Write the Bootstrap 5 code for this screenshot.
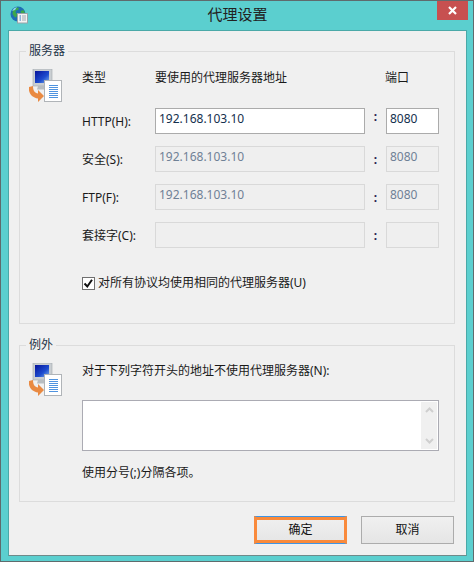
<!DOCTYPE html>
<html lang="zh">
<head>
<meta charset="utf-8">
<title>代理设置</title>
<link href="https://cdn.jsdelivr.net/npm/bootstrap@5.3.0/dist/css/bootstrap.min.css" rel="stylesheet">
<style>
html,body{margin:0;height:562px;overflow:hidden;background:#5bcfcf}
body{font-family:"Noto Sans","Noto Sans CJK SC",sans-serif;font-size:12px;line-height:16px;color:#1a1a1a}
.win-frame{height:562px;border:1px solid #5f6b6d;background:#5bcfcf;padding:0 6px 5px 7px}
.win-title{height:29px;flex:none}
.win-side{flex:1 1 0;min-width:0}
.win-caption{font-size:15px;line-height:20px;color:#222;margin-top:3px}
.win-globe{margin:5px 0 0 2px;display:block}
.win-close{width:31px;height:19px;margin-right:-1px;background:#c75050;border:0;padding:0}
.win-client{flex:1 1 auto;background:#f0f0f0;border:1px solid #4aa9a8;border-bottom-color:#6f8a8a;padding:12px 11px 0 10px}
.win-group{border:1px solid #dcdcdc;min-width:0;margin:0;padding:0;height:auto}
.win-group legend{float:none;width:auto;font-size:12px;line-height:16px;margin:0 0 0 6px;padding:0 3px;color:#1f3347}
.group-a{height:281px}
.group-b{height:165px;margin-top:13px}
.icon-col{width:62px;flex:none;padding:10px 0 0 9px}
.icon-col svg{display:block}
.proxy-grid{display:grid;grid-template-columns:73px 210px 21px 53px;grid-auto-rows:26px;row-gap:12px;width:357px}
.proxy-head{height:16px;margin-top:11px;margin-bottom:22px;display:grid;grid-template-columns:73px 231px 53px;width:357px}
.proxy-head span:last-child{margin-left:-1px}
.row-label{padding-top:6px;white-space:nowrap}
.colon{text-align:center;font-weight:700;color:#2b1b4f;padding-top:6px;line-height:16px}
.colon-up{padding-top:1px}
.win-input.form-control{border:1px solid #ababab;border-radius:0;font-size:12px;line-height:16px;padding:0 3px 6px 3px;height:26px;min-height:0;background:#fff;color:#14304e;box-shadow:none}
.win-input.form-control:disabled{border-color:#d9d9d9;background:#efefef;color:#6f8196;opacity:1}
.win-check{margin-top:27px;gap:3px;min-height:0;padding:0}
.win-check .form-check-input{width:13px;height:13px;margin:0;float:none;border:1px solid #707070;border-radius:0;background-color:#fff;background-size:13px;box-shadow:none}
.win-check .form-check-input:checked{background-color:#fff;border-color:#707070;background-image:url("data:image/svg+xml,%3csvg xmlns='http://www.w3.org/2000/svg' viewBox='0 0 13 13'%3e%3cpath fill='none' stroke='%23111' stroke-width='2' d='M2.5 6.5l2.8 3L10 2.8'/%3e%3c/svg%3e")}
.win-check .form-check-label{color:#1a1a1a}
.excl-text{margin-top:10px;height:16px}
.excl-box{width:357px;height:51px;margin-top:21px;border:1px solid #ababb3;background:#fff;padding:1px}
.excl-box textarea{border:0;border-radius:0;resize:none;height:100%;min-height:0;padding:2px;box-shadow:none;background:#fff}
.win-scroll{width:16px;flex:none;background:#f0f0f0;padding:5px 0}
.win-scroll svg{display:block;margin:0 auto}
.excl-note{margin-top:14px}
.win-actions{gap:14px;margin-top:14px;margin-right:1px}
.win-btn.btn{width:93px;height:28px;padding:0;border-radius:0;font-size:12px;line-height:16px;color:#111;border:1px solid #acacac;background:linear-gradient(#f0f0f0,#e5e5e5)}
.win-btn.win-primary.btn{border-width:1px 3px;border-color:#3d95e6 #f98a3c;box-shadow:inset 0 3px 0 #f98a3c,inset 0 -3px 0 #f98a3c}
</style>
</head>
<body>
<div class="win-frame d-flex flex-column">
  <div class="win-title d-flex align-items-start">
    <div class="win-side">
      <svg class="win-globe" width="18" height="18" viewBox="0 0 18 18">
        <circle cx="8" cy="8" r="7.5" fill="#1f6fb5"/>
        <path d="M3 3.5c2-2.5 5-2.5 6-1.500l-1 2-2 .5-.5 2 1.500 1.500-.5 3-1.500.5-2.500-3.500zM10.500 5l3-1 1.500 3-1 3-2.500-1.500z" fill="#3da84a"/>
        <path d="M2 5a7 7 0 0 1 5-4l-2 3z" fill="#8fd0ee"/>
        <rect x="7.500" y="7.500" width="10" height="9.500" fill="#f3f3f3" stroke="#9aa3a8"/>
        <path d="M9.500 10h1.500M9.500 12h1.500M9.500 14h1.500" stroke="#2b74c0"/>
        <path d="M12 10h4M12 12h4M12 14h4" stroke="#a2a9ae"/>
      </svg>
    </div>
    <div class="win-caption">代理设置</div>
    <div class="win-side d-flex justify-content-end">
      <button type="button" class="win-close d-flex align-items-center justify-content-center" aria-label="关闭">
        <svg width="9" height="9" viewBox="0 0 9 9"><path d="M1 1l7 7M8 1L1 8" stroke="#fff" stroke-width="2.200"/></svg>
      </button>
    </div>
  </div>

  <div class="win-client d-flex flex-column">
    <fieldset class="win-group group-a">
      <legend>服务器</legend>
      <div class="d-flex">
        <div class="icon-col">
          <svg width="33" height="34" viewBox="0 0 33 34">
            <defs><linearGradient id="scr" x1="0" y1="0" x2="1" y2="1"><stop offset="0" stop-color="#06129a"/><stop offset=".6" stop-color="#1d4ccf"/><stop offset="1" stop-color="#7fb2ea"/></linearGradient></defs>
            <rect x="4" y="0" width="19" height="17" fill="#c9ced2" stroke="#a0a7ac" stroke-width=".6"/>
            <rect x="6" y="2" width="14" height="12" fill="url(#scr)"/>
            <path d="M9 17h10l1 3.500H8z" fill="#b8bdc1"/>
            <rect x="15.500" y="11.500" width="17" height="21" fill="#fff" stroke="#b0b4b8"/>
            <path d="M20 16.500h9M20 18.500h9M20 20.500h9M20 22.500h9M20 24.500h9M20 26.500h9M20 28.500h9" stroke="#4f93e0"/>
            <path d="M0 18l4-1c0 5 2 7 5 7.500V21l6 6-6 6v-3.500C3 29-1 24 0 18z" fill="#e98a42"/>
          </svg>
        </div>
        <div>
          <div class="proxy-head">
            <span>类型</span><span>要使用的代理服务器地址</span><span>端口</span>
          </div>
          <div class="proxy-grid">
            <label class="row-label" for="f1">HTTP(H):</label>
            <input id="f1" class="form-control win-input" value="192.168.103.10">
            <span class="colon colon-up">:</span>
            <input class="form-control win-input" value="8080" aria-label="HTTP 端口">

            <label class="row-label" for="f2">安全(S):</label>
            <input id="f2" class="form-control win-input" value="192.168.103.10" disabled>
            <span class="colon">:</span>
            <input class="form-control win-input" value="8080" disabled aria-label="安全 端口">

            <label class="row-label" for="f3">FTP(F):</label>
            <input id="f3" class="form-control win-input" value="192.168.103.10" disabled>
            <span class="colon">:</span>
            <input class="form-control win-input" value="8080" disabled aria-label="FTP 端口">

            <label class="row-label" for="f4">套接字(C):</label>
            <input id="f4" class="form-control win-input" disabled>
            <span class="colon">:</span>
            <input class="form-control win-input" disabled aria-label="套接字 端口">
          </div>
          <div class="form-check win-check d-flex align-items-center">
            <input class="form-check-input" type="checkbox" id="same" checked>
            <label class="form-check-label" for="same">对所有协议均使用相同的代理服务器(U)</label>
          </div>
        </div>
      </div>
    </fieldset>

    <fieldset class="win-group group-b">
      <legend>例外</legend>
      <div class="d-flex">
        <div class="icon-col">
          <svg width="33" height="34" viewBox="0 0 33 34">
            <rect x="4" y="0" width="19" height="17" fill="#c9ced2" stroke="#a0a7ac" stroke-width=".6"/>
            <rect x="6" y="2" width="14" height="12" fill="url(#scr)"/>
            <path d="M9 17h10l1 3.500H8z" fill="#b8bdc1"/>
            <rect x="15.500" y="11.500" width="17" height="21" fill="#fff" stroke="#b0b4b8"/>
            <path d="M20 16.500h9M20 18.500h9M20 20.500h9M20 22.500h9M20 24.500h9M20 26.500h9M20 28.500h9" stroke="#4f93e0"/>
            <path d="M0 18l4-1c0 5 2 7 5 7.500V21l6 6-6 6v-3.500C3 29-1 24 0 18z" fill="#e98a42"/>
          </svg>
        </div>
        <div>
          <div class="excl-text">对于下列字符开头的地址不使用代理服务器(N):</div>
          <div class="excl-box d-flex">
            <textarea class="form-control flex-grow-1" aria-label="例外"></textarea>
            <div class="win-scroll d-flex flex-column justify-content-between">
              <svg width="9" height="6" viewBox="0 0 9 6"><path d="M1 5l3.500-3.500L8 5" fill="none" stroke="#cfcfcf" stroke-width="2"/></svg>
              <svg width="9" height="6" viewBox="0 0 9 6"><path d="M1 1l3.500 3.500L8 1" fill="none" stroke="#cfcfcf" stroke-width="2"/></svg>
            </div>
          </div>
          <div class="excl-note">使用分号(;)分隔各项。</div>
        </div>
      </div>
    </fieldset>

    <div class="win-actions d-flex justify-content-end">
      <button type="button" class="btn win-btn win-primary">确定</button>
      <button type="button" class="btn win-btn">取消</button>
    </div>
  </div>
</div>
<script src="https://cdn.jsdelivr.net/npm/bootstrap@5.3.0/dist/js/bootstrap.bundle.min.js"></script>
</body>
</html>
